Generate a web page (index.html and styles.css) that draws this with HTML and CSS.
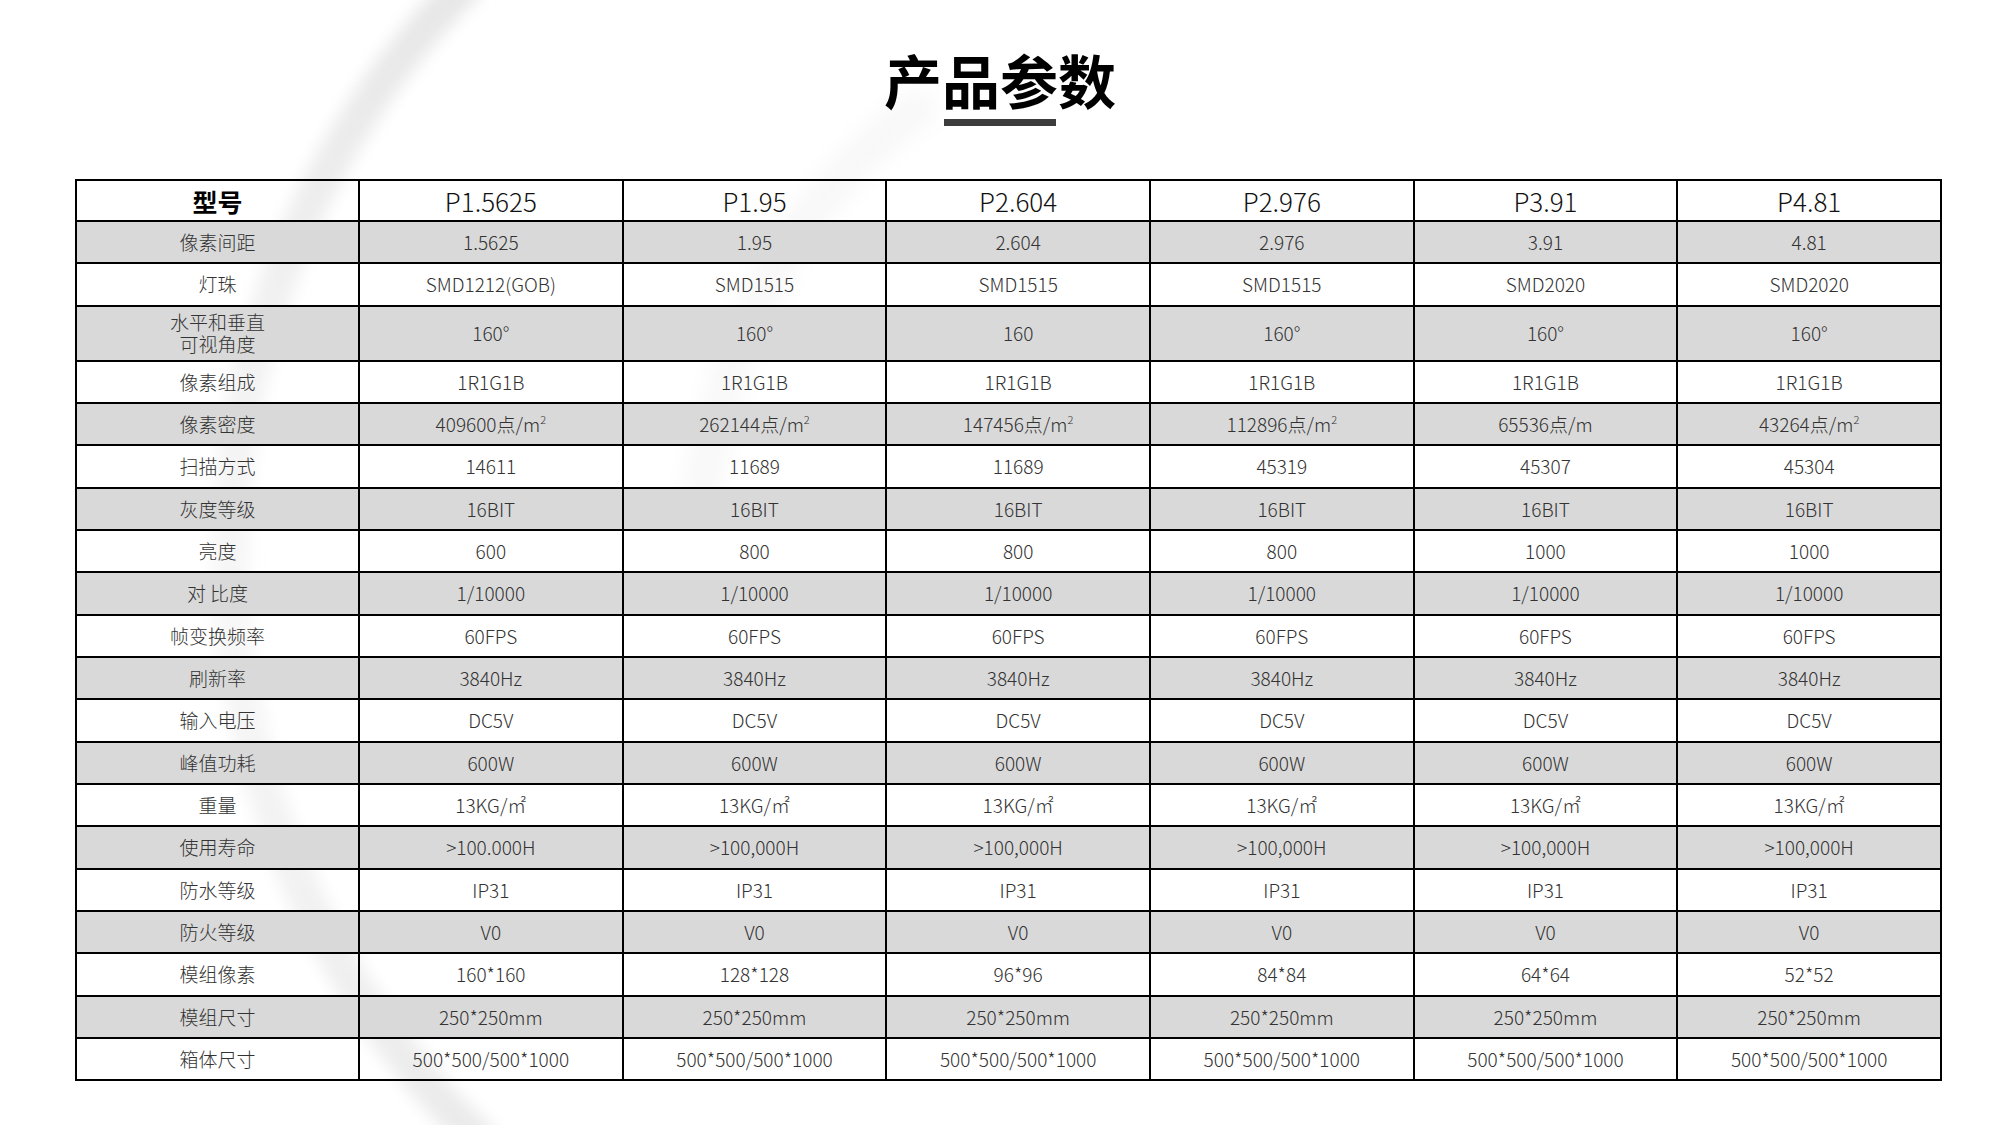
FILE: index.html
```html
<!DOCTYPE html>
<html lang="zh-CN">
<head>
<meta charset="utf-8">
<title>产品参数</title>
<link rel="stylesheet" href="styles.css">
</head>
<body>
<div class="page">
  <svg class="swoosh" width="2000" height="1125" viewBox="0 0 2000 1125" aria-hidden="true">
    <defs>
      <filter id="blur1" x="-20%" y="-20%" width="140%" height="140%"><feGaussianBlur stdDeviation="8"/></filter>
      <filter id="blur2" x="-20%" y="-20%" width="140%" height="140%"><feGaussianBlur stdDeviation="14"/></filter>
      <linearGradient id="fade1" x1="0" y1="0" x2="0" y2="1">
        <stop offset="0" stop-color="#e6e6e6" stop-opacity="1"/>
        <stop offset="0.25" stop-color="#ececec" stop-opacity="0.8"/>
        <stop offset="0.55" stop-color="#efefef" stop-opacity="0.5"/>
        <stop offset="1" stop-color="#e8e8e8" stop-opacity="0.9"/>
      </linearGradient>
    </defs>
    <path d="M 470 -20 A 810 810 0 0 0 485 1145" fill="none" stroke="url(#fade1)" stroke-width="36" filter="url(#blur1)"/>
    <path d="M 930 100 Q 740 230 700 500" fill="none" stroke="#ededed" stroke-opacity="0.55" stroke-width="26" filter="url(#blur2)"/>
  </svg>

  <header class="title-block">
    <h1 class="title">产品参数</h1>
    <div class="title-bar"></div>
  </header>

  <table class="spec">
    <colgroup>
      <col class="c-label">
      <col class="c-val"><col class="c-val"><col class="c-val"><col class="c-val"><col class="c-val"><col class="c-val">
    </colgroup>
    <thead>
      <tr class="head">
        <th class="head-label">型号</th>
        <th>P1.5625</th><th>P1.95</th><th>P2.604</th><th>P2.976</th><th>P3.91</th><th>P4.81</th>
      </tr>
    </thead>
    <tbody>
      <tr class="alt"><td>像素间距</td><td>1.5625</td><td>1.95</td><td>2.604</td><td>2.976</td><td>3.91</td><td>4.81</td></tr>
      <tr><td>灯珠</td><td>SMD1212(GOB)</td><td>SMD1515</td><td>SMD1515</td><td>SMD1515</td><td>SMD2020</td><td>SMD2020</td></tr>
      <tr class="alt tall"><td class="two-line">水平和垂直<br>可视角度</td><td>160°</td><td>160°</td><td>160</td><td>160°</td><td>160°</td><td>160°</td></tr>
      <tr><td>像素组成</td><td>1R1G1B</td><td>1R1G1B</td><td>1R1G1B</td><td>1R1G1B</td><td>1R1G1B</td><td>1R1G1B</td></tr>
      <tr class="alt"><td>像素密度</td><td>409600点/m<sup>2</sup></td><td>262144点/m<sup>2</sup></td><td>147456点/m<sup>2</sup></td><td>112896点/m<sup>2</sup></td><td>65536点/m</td><td>43264点/m<sup>2</sup></td></tr>
      <tr><td>扫描方式</td><td>14611</td><td>11689</td><td>11689</td><td>45319</td><td>45307</td><td>45304</td></tr>
      <tr class="alt"><td>灰度等级</td><td>16BIT</td><td>16BIT</td><td>16BIT</td><td>16BIT</td><td>16BIT</td><td>16BIT</td></tr>
      <tr><td>亮度</td><td>600</td><td>800</td><td>800</td><td>800</td><td>1000</td><td>1000</td></tr>
      <tr class="alt"><td>对 比度</td><td>1/10000</td><td>1/10000</td><td>1/10000</td><td>1/10000</td><td>1/10000</td><td>1/10000</td></tr>
      <tr><td>帧变换频率</td><td>60FPS</td><td>60FPS</td><td>60FPS</td><td>60FPS</td><td>60FPS</td><td>60FPS</td></tr>
      <tr class="alt"><td>刷新率</td><td>3840Hz</td><td>3840Hz</td><td>3840Hz</td><td>3840Hz</td><td>3840Hz</td><td>3840Hz</td></tr>
      <tr><td>输入电压</td><td>DC5V</td><td>DC5V</td><td>DC5V</td><td>DC5V</td><td>DC5V</td><td>DC5V</td></tr>
      <tr class="alt"><td>峰值功耗</td><td>600W</td><td>600W</td><td>600W</td><td>600W</td><td>600W</td><td>600W</td></tr>
      <tr><td>重量</td><td>13KG/㎡</td><td>13KG/㎡</td><td>13KG/㎡</td><td>13KG/㎡</td><td>13KG/㎡</td><td>13KG/㎡</td></tr>
      <tr class="alt"><td>使用寿命</td><td>&gt;100.000H</td><td>&gt;100,000H</td><td>&gt;100,000H</td><td>&gt;100,000H</td><td>&gt;100,000H</td><td>&gt;100,000H</td></tr>
      <tr><td>防水等级</td><td>IP31</td><td>IP31</td><td>IP31</td><td>IP31</td><td>IP31</td><td>IP31</td></tr>
      <tr class="alt"><td>防火等级</td><td>V0</td><td>V0</td><td>V0</td><td>V0</td><td>V0</td><td>V0</td></tr>
      <tr><td>模组像素</td><td>160*160</td><td>128*128</td><td>96*96</td><td>84*84</td><td>64*64</td><td>52*52</td></tr>
      <tr class="alt"><td>模组尺寸</td><td>250*250mm</td><td>250*250mm</td><td>250*250mm</td><td>250*250mm</td><td>250*250mm</td><td>250*250mm</td></tr>
      <tr><td>箱体尺寸</td><td>500*500/500*1000</td><td>500*500/500*1000</td><td>500*500/500*1000</td><td>500*500/500*1000</td><td>500*500/500*1000</td><td>500*500/500*1000</td></tr>
    </tbody>
  </table>
</div>
</body>
</html>
```

FILE: styles.css
```css
html, body {
  margin: 0;
  padding: 0;
  background: #ffffff;
}

body {
  width: 2000px;
  height: 1125px;
  overflow: hidden;
  font-family: "Noto Sans CJK SC", "Noto Sans", sans-serif;
  color: #1e1e1e;
}

.page {
  position: relative;
  width: 2000px;
  height: 1125px;
  display: flex;
  flex-direction: column;
  align-items: flex-start;
}

.swoosh {
  position: absolute;
  left: 0;
  top: 0;
  z-index: 0;
  pointer-events: none;
}

.title-block {
  position: relative;
  z-index: 1;
  align-self: stretch;
  display: flex;
  flex-direction: column;
  align-items: center;
  padding-top: 50px;
}

.title {
  margin: 0;
  font-size: 58px;
  line-height: 58px;
  font-weight: 700;
  color: #000;
  letter-spacing: 0;
}

.title-bar {
  width: 112px;
  height: 7px;
  margin-top: 11px;
  background: #3d3d3d;
}

.spec {
  position: relative;
  z-index: 1;
  margin-top: 53px;
  margin-left: 75px;
  width: 1867px;
  border-collapse: collapse;
  table-layout: fixed;
  border: 2px solid #000;
}

.c-label { width: 283px; }
.c-val { width: 263.67px; }

.spec th,
.spec td {
  border: 2px solid #000;
  padding: 0;
  text-align: center;
  vertical-align: middle;
  white-space: nowrap;
}

.spec th {
  height: 39px;
  font-size: 26px;
  line-height: 30px;
  font-weight: 300;
  color: #111;
}

.spec th.head-label {
  font-weight: 700;
  font-size: 25px;
  color: #000;
}

.spec td {
  height: 40.34px;
  font-size: 19px;
  font-weight: 300;
  color: #333;
  line-height: 22px;
}

.spec tr.alt td {
  background: #d9d9d9;
}

.spec tr.tall td {
  height: 53px;
}

.spec td.two-line {
  line-height: 22px;
}

.spec sup {
  font-size: 11px;
  line-height: 0;
  vertical-align: 8px;
}
```
